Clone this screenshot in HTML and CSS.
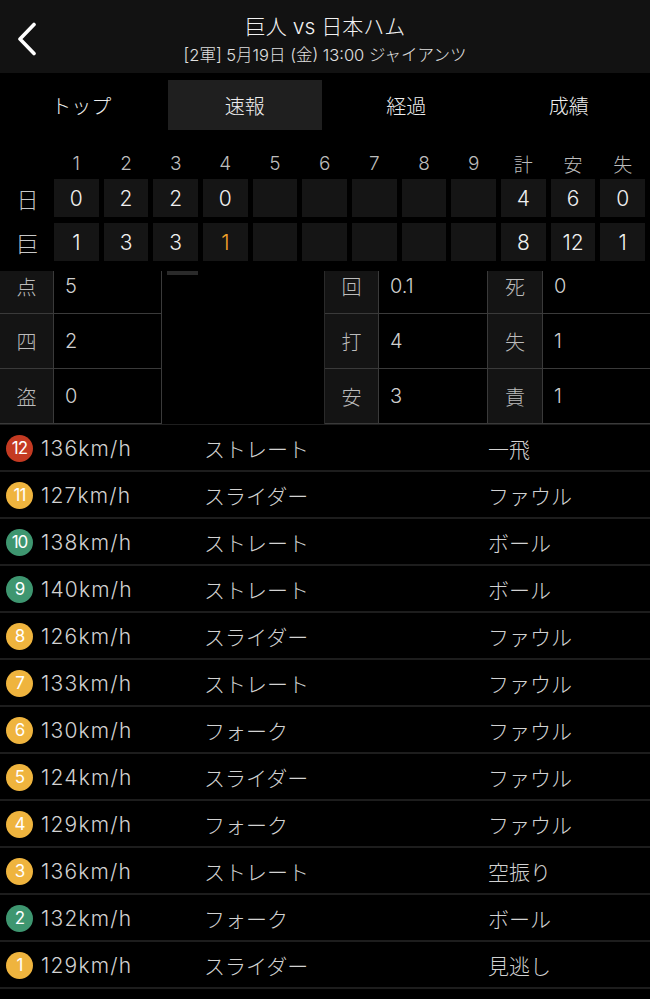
FILE: index.html
```html
<!DOCTYPE html>
<html lang="ja">
<head>
    <meta charset="UTF-8">
    <meta name="viewport" content="width=device-width, initial-scale=1.0">
    <title>巨人 vs 日本ハム</title>
    <link rel="stylesheet" href="styles.css">
</head>
<body>

<header class="header">
    <a class="back" href="#">
        <svg width="20" height="34" viewBox="0 0 20 34"><polyline points="17,2.5 3,17 17,31.5" fill="none" stroke="#fff" stroke-width="3.6" stroke-linecap="round" stroke-linejoin="round"/></svg>
    </a>
    <div class="title">巨人 vs 日本ハム</div>
    <div class="subtitle">[2軍] 5月19日 (金) 13:00 ジャイアンツ</div>
</header>

<nav class="tabs">
    <div class="tab">トップ</div>
    <div class="tab active">速報</div>
    <div class="tab">経過</div>
    <div class="tab">成績</div>
</nav>

<section class="scoreboard">
    <div class="score-row head">
        <span></span><span>1</span><span>2</span><span>3</span><span>4</span><span>5</span><span>6</span><span>7</span><span>8</span><span>9</span><span>計</span><span>安</span><span>失</span>
    </div>
    <div class="score-row">
        <span class="team">日</span>
        <span class="cell">0</span><span class="cell">2</span><span class="cell">2</span><span class="cell">0</span>
        <span class="cell"></span><span class="cell"></span><span class="cell"></span><span class="cell"></span><span class="cell"></span>
        <span class="cell">4</span><span class="cell">6</span><span class="cell">0</span>
    </div>
    <div class="score-row">
        <span class="team">巨</span>
        <span class="cell">1</span><span class="cell">3</span><span class="cell">3</span><span class="cell live">1</span>
        <span class="cell"></span><span class="cell"></span><span class="cell"></span><span class="cell"></span><span class="cell"></span>
        <span class="cell">8</span><span class="cell">12</span><span class="cell">1</span>
    </div>
</section>

<section class="stats">
    <div class="scroll-bar"></div>
    <div class="stats-grid">
        <div class="lbl">点</div><div class="val">5</div>
        <div class="blank"></div>
        <div class="lbl">回</div><div class="val">0.1</div>
        <div class="lbl">死</div><div class="val last">0</div>

        <div class="lbl">四</div><div class="val">2</div>
        <div class="lbl">打</div><div class="val">4</div>
        <div class="lbl">失</div><div class="val last">1</div>

        <div class="lbl">盗</div><div class="val">0</div>
        <div class="lbl">安</div><div class="val">3</div>
        <div class="lbl">責</div><div class="val last">1</div>
    </div>
</section>

<ul class="pitches" id="pitches"></ul>

<script>
    // pitch log, newest first
    const pitches = [
        [12, 'red', '136km/h', 'ストレート', '一飛'],
        [11, 'yellow', '127km/h', 'スライダー', 'ファウル'],
        [10, 'green', '138km/h', 'ストレート', 'ボール'],
        [9, 'green', '140km/h', 'ストレート', 'ボール'],
        [8, 'yellow', '126km/h', 'スライダー', 'ファウル'],
        [7, 'yellow', '133km/h', 'ストレート', 'ファウル'],
        [6, 'yellow', '130km/h', 'フォーク', 'ファウル'],
        [5, 'yellow', '124km/h', 'スライダー', 'ファウル'],
        [4, 'yellow', '129km/h', 'フォーク', 'ファウル'],
        [3, 'yellow', '136km/h', 'ストレート', '空振り'],
        [2, 'green', '132km/h', 'フォーク', 'ボール'],
        [1, 'yellow', '129km/h', 'スライダー', '見逃し']
    ];

    const list = document.getElementById('pitches');
    pitches.forEach(p => {
        const li = document.createElement('li');
        li.className = 'pitch';
        li.innerHTML =
            '<span class="badge ' + p[1] + '">' + p[0] + '</span>' +
            '<span class="speed">' + p[2] + '</span>' +
            '<span class="type">' + p[3] + '</span>' +
            '<span class="result">' + p[4] + '</span>';
        list.appendChild(li);
    });
</script>

</body>
</html>
```

FILE: styles.css
```css
body {
    margin: 0;
    background-color: #000;
    color: #d6d6d6;
    font-family: Inter, "Noto Sans CJK JP", sans-serif;
    font-weight: 300;
}
.header {
    position: relative;
    height: 73px;
    background-color: #121212;
    display: flex;
    flex-direction: column;
    align-items: center;
}
.back {
    position: absolute;
    left: 17px;
    top: 22px;
    display: block;
    line-height: 0;
}
.title {
    margin-top: 12px;
    font-size: 21px;
    line-height: 30px;
    color: #f2f2f2;
}
.subtitle {
    margin-top: 1px;
    font-size: 16.5px;
    line-height: 24px;
    color: #e0e0e0;
}
.tabs {
    display: grid;
    grid-template-columns: repeat(4, 1fr);
    margin-top: 7px;
    height: 50px;
}
.tab {
    display: flex;
    align-items: center;
    justify-content: center;
    font-size: 20px;
    color: #eee;
}
.tab.active {
    background-color: #1f1f1f;
    margin: 0 3px 0 5px;
}
.scoreboard {
    padding: 18px 0 10px;
}
.score-row {
    display: grid;
    grid-template-columns: 49px repeat(12, 1fr);
    column-gap: 5px;
    padding-right: 5px;
    height: 38px;
    font-size: 21px;
}
.score-row.head {
    height: 30px;
    margin-bottom: 1px;
    font-size: 19px;
    color: #bdbdbd;
}
.score-row + .score-row + .score-row {
    margin-top: 6px;
}
.score-row span {
    display: flex;
    align-items: center;
    justify-content: center;
}
.team {
    margin-left: 6px;
    font-size: 22px;
    color: #c8c8c8;
}
.cell {
    background-color: #151515;
    color: #f0f0f0;
}
.cell.live {
    color: #f2a22a;
}
.stats {
    position: relative;
    height: 153px;
    overflow: hidden;
    border-bottom: 1px solid #1e1e1e;
}
.scroll-bar {
    position: absolute;
    left: 167px;
    top: 0;
    width: 31px;
    height: 4px;
    background-color: #2a2a2a;
}
.stats-grid {
    display: grid;
    grid-template-columns: 54px 108px 163px 54px 109px 55px 107px;
    grid-auto-rows: 55px;
    margin-top: -12px;
    font-size: 20px;
}
.lbl, .val {
    display: flex;
    align-items: center;
    border-bottom: 1px solid #3a3a3a;
    border-right: 1px solid #3a3a3a;
}
.lbl {
    justify-content: center;
    background-color: #141414;
    color: #bcbcbc;
}
.val {
    padding-left: 11px;
    color: #cfcfcf;
}
.val.last {
    border-right: none;
}
.blank {
    grid-row: span 3;
    border-right: 1px solid #2a2a2a;
}
.pitches {
    list-style: none;
    margin: 0;
    padding: 0;
}
.pitch {
    display: flex;
    align-items: center;
    height: 45px;
    padding-top: 1px;
    box-sizing: border-box;
    height: 47px;
    border-bottom: 2px solid #1d1d1d;
    font-size: 21px;
    color: #d2d2d2;
}
.badge {
    width: 27px;
    height: 27px;
    margin-left: 6px;
    border-radius: 50%;
    display: flex;
    align-items: center;
    justify-content: center;
    font-size: 17px;
    font-weight: 400;
    color: #fff;
    letter-spacing: -1px;
}
.badge.red {
    background-color: #c43a22;
}
.badge.yellow {
    background-color: #efb43e;
}
.badge.green {
    background-color: #3e9670;
}
.speed {
    margin-left: 8px;
    width: 163px;
    letter-spacing: 1.2px;
}
.type {
    width: 284px;
}
```
